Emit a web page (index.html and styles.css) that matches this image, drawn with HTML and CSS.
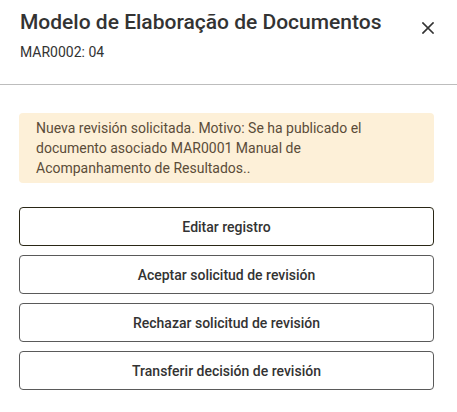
FILE: index.html
```html
<!DOCTYPE html>
<html>
<head>
<meta charset="utf-8">
<link rel="stylesheet" href="styles.css">
</head>
<body>
<div class="dialog">
  <header class="head">
    <div class="titles">
      <h1 class="title">Modelo de Elaboração de Documentos</h1>
      <div class="sub">MAR0002: 04</div>
    </div>
    <button class="close" aria-label="Cerrar">
      <svg width="12" height="12" viewBox="0 0 12 12"><path d="M1 1L11 11M11 1L1 11" stroke="#333" stroke-width="1.7" stroke-linecap="square"/></svg>
    </button>
  </header>
  <div class="body">
    <div class="alert">Nueva revisión solicitada. Motivo: Se ha publicado el documento asociado MAR0001 Manual de Acompanhamento de Resultados..</div>
    <div class="actions">
      <button class="btn btn-focus">Editar registro</button>
      <button class="btn">Aceptar solicitud de revisión</button>
      <button class="btn">Rechazar solicitud de revisión</button>
      <button class="btn">Transferir decisión de revisión</button>
    </div>
  </div>
</div>
</body>
</html>
```
FILE: styles.css
```css
* { box-sizing: border-box; }
html, body { margin: 0; padding: 0; background: #fff; }
body { font-family: Roboto, "Noto Sans", sans-serif; color: #333; }
.dialog { width: 457px; }
.head {
  display: flex;
  justify-content: space-between;
  align-items: flex-start;
  padding: 10px 23px 0 20px;
  height: 85px;
  border-bottom: 1px solid #bdbdbd;
}
.title {
  margin: 0;
  font-size: 21px;
  line-height: 24px;
  font-weight: 500;
  color: #333;
}
.sub {
  margin-top: 10px;
  font-size: 14px;
  line-height: 16px;
  color: #333;
}
.close {
  border: 0;
  background: none;
  padding: 0;
  margin-top: 12px;
  width: 12px;
  height: 12px;
  display: block;
}
.close svg { display: block; }
.body { padding: 28px 23px 0 19px; }
.alert {
  background: #fdf0d8;
  border-radius: 4px;
  padding: 5px 16px 5px 17px;
  font-size: 14px;
  line-height: 20px;
  color: #5b4c38;
}
.actions {
  margin-top: 24px;
  display: flex;
  flex-direction: column;
  gap: 9px;
}
.btn {
  height: 39px;
  border: 1px solid #5a5a5a;
  border-radius: 4px;
  background: #fff;
  font-family: Roboto, "Noto Sans", sans-serif;
  font-size: 14px;
  font-weight: 500;
  color: #333;
  padding: 0;
}
.btn-focus { border-color: #2a2716; }
```
